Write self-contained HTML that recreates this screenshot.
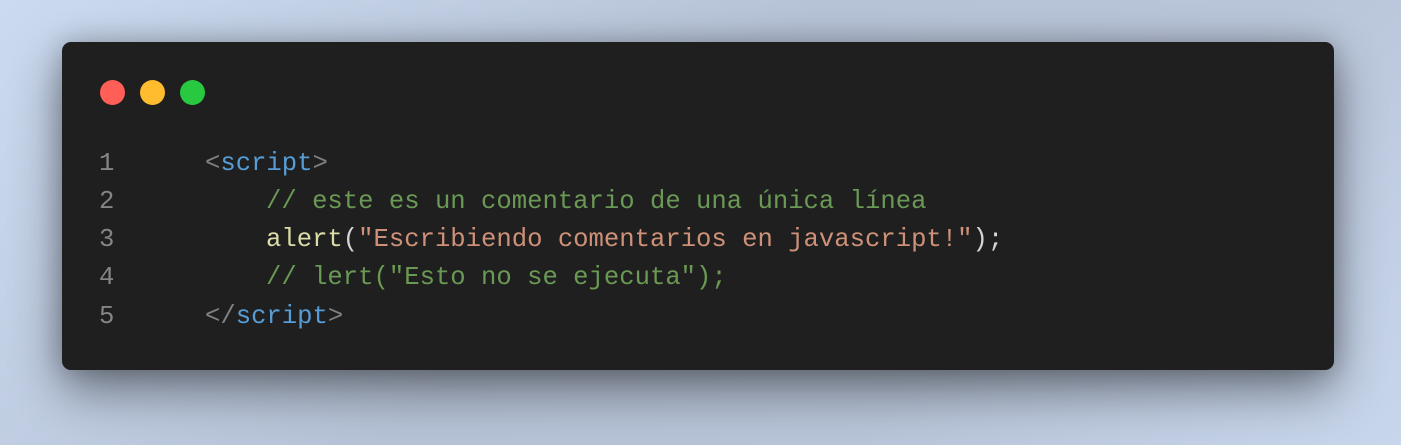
<!DOCTYPE html>
<html><head><style>
html,body{margin:0;padding:0;}
body{width:1401px;height:445px;overflow:hidden;background:linear-gradient(135deg,#cbdaf0 0%,#b6c2d6 45%,#b8c4d8 70%,#c8d6ec 100%);position:relative;font-family:"Liberation Mono",monospace;}
.card{position:absolute;left:62px;top:42px;width:1272px;height:328px;background:#1f1f1f;border-radius:9px;box-shadow:0 20px 50px rgba(0,0,0,0.45),0 0 25px rgba(0,0,0,0.2);}
.dot{position:absolute;top:38px;width:25px;height:25px;border-radius:50%;}
.row{position:absolute;left:0;height:38px;line-height:38px;font-size:25.6px;white-space:pre;color:#d4d4d4;width:1200px;}
.ln{position:absolute;left:37px;color:#858585;}
.l{position:absolute;}
.g{color:#808080}.b{color:#569cd6}.c{color:#6a9955}.f{color:#dcdcaa}.s{color:#ce9178}
</style></head><body>
<div class="card">
<div class="dot" style="left:38px;background:#ff5f57"></div>
<div class="dot" style="left:78px;background:#febc2e"></div>
<div class="dot" style="left:118px;background:#28c840"></div>
<div class="row" style="top:103px"><span class="ln">1</span><span class="l" style="left:143px"><span class="g">&lt;</span><span class="b">script</span><span class="g">&gt;</span></span></div>
<div class="row" style="top:141px"><span class="ln">2</span><span class="l c" style="left:204px">// este es un comentario de una única línea</span></div>
<div class="row" style="top:179px"><span class="ln">3</span><span class="l" style="left:204px"><span class="f">alert</span>(<span class="s">"Escribiendo comentarios en javascript!"</span>);</span></div>
<div class="row" style="top:217px"><span class="ln">4</span><span class="l c" style="left:204px">// lert("Esto no se ejecuta");</span></div>
<div class="row" style="top:256px"><span class="ln">5</span><span class="l" style="left:143px"><span class="g">&lt;/</span><span class="b">script</span><span class="g">&gt;</span></span></div>
</div>
</body></html>
